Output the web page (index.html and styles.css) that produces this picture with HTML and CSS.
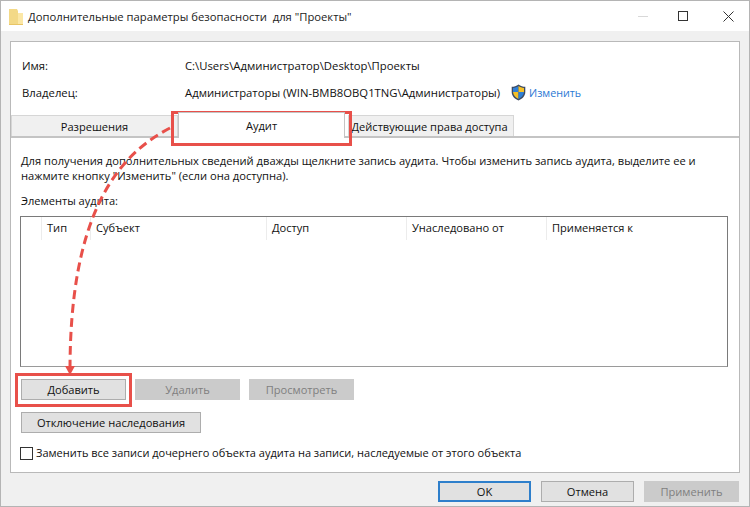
FILE: index.html
```html
<!DOCTYPE html>
<html lang="ru">
<head>
<meta charset="UTF-8">
<title>Дополнительные параметры безопасности</title>
<link rel="stylesheet" href="styles.css">
</head>
<body>
<div class="window">

  <!-- Заголовок окна -->
  <div class="titlebar">
    <svg class="folder" width="14" height="17" viewBox="0 0 14 17">
      <path d="M0 1h8l1 2v14H0z" fill="#f3d987"/>
      <path d="M9 5h5v12H9z" fill="#fbe7a6"/>
      <path d="M0 16h14v1H0z" fill="#e8c566"/>
    </svg>
    <span class="title">Дополнительные параметры безопасности&nbsp; для "Проекты"</span>
    <div class="winbtns">
      <span class="min"></span>
      <span class="max"></span>
      <svg class="close" width="11" height="11" viewBox="0 0 11 11"><path d="M.5.5l10 10M10.5.5l-10 10" stroke="#333" fill="none"/></svg>
    </div>
  </div>

  <div class="panel">
    <div class="info">
      <div class="info-row"><span class="info-label">Имя:</span><span>C:\Users\Администратор\Desktop\Проекты</span></div>
      <div class="info-row">
        <span class="info-label">Владелец:</span>
        <span>Администраторы (WIN-BMB8OBQ1TNG\Администраторы)</span>
        <svg class="shield" width="15" height="17" viewBox="0 0 15 17">
          <path d="M7.5 0.5C5.5 2 3 2.800 0.700 2.800V8c0 4 3 7 6.800 8.500C11.300 15 14.300 12 14.300 8V2.800C12 2.800 9.500 2 7.500 .5z" fill="#3c4a63"/>
          <path d="M7.500 2C6 3 4 3.800 2 4v4h5.500z" fill="#2f7fd6"/>
          <path d="M7.500 2v6H13V4C11 3.800 9 3 7.500 2z" fill="#f5c026"/>
          <path d="M2 8h5.500v7C4.500 13.800 2.300 11.300 2 8z" fill="#f5c026"/>
          <path d="M7.500 8H13c-.3 3.300-2.500 5.800-5.500 7z" fill="#2f7fd6"/>
        </svg>
        <a class="link">Изменить</a>
      </div>
    </div>

    <div class="tabs">
      <div class="tab tab-first">Разрешения</div>
      <div class="tab tab-active">Аудит</div>
      <div class="tab tab-last">Действующие права доступа</div>
    </div>

    <div class="tabbody">
      <p class="hint">Для получения дополнительных сведений дважды щелкните запись аудита. Чтобы изменить запись аудита, выделите ее и<br>нажмите кнопку "Изменить" (если она доступна).</p>
      <div class="list-label">Элементы аудита:</div>

      <div class="list">
        <div class="list-head">
          <div class="col col-blank"></div>
          <div class="col col-type">Тип</div>
          <div class="col col-subj">Субъект</div>
          <div class="col col-access">Доступ</div>
          <div class="col col-inh">Унаследовано от</div>
          <div class="col col-apply">Применяется к</div>
        </div>
      </div>

      <div class="actions">
        <button class="btn btn-add">Добавить</button>
        <button class="btn btn-off">Удалить</button>
        <button class="btn btn-off">Просмотреть</button>
      </div>
      <button class="btn btn-inherit">Отключение наследования</button>

      <label class="replace"><span class="check"></span>Заменить все записи дочернего объекта аудита на записи, наследуемые от этого объекта</label>
    </div>
  </div>

  <div class="footer">
    <button class="btn btn-foot btn-ok">OK</button>
    <button class="btn btn-foot">Отмена</button>
    <button class="btn btn-foot btn-off btn-apply">Применить</button>
  </div>

  <!-- Пометки поверх окна -->
  <div class="mark mark-tab"></div>
  <div class="mark mark-add"></div>
  <svg class="arrow" width="750" height="507" viewBox="0 0 750 507">
    <path d="M170 128C112 158 70 222 70 370" fill="none" stroke="#e8504a" stroke-width="3" stroke-dasharray="9 5"/>
    <path d="M65 366h10l-5 9z" fill="#e8504a"/>
  </svg>
</div>
</body>
</html>
```
FILE: styles.css
```css
*{box-sizing:border-box;}
html,body{margin:0;padding:0;}
body{width:750px;height:507px;overflow:hidden;font-family:"Open Sans","Noto Sans",sans-serif;font-size:11.1px;color:#111;}
.window{position:relative;width:750px;height:507px;background:#f0f0f0;border:1px solid #b4b4b4;display:flex;flex-direction:column;}

.titlebar{height:30px;background:#fff;display:flex;align-items:center;padding-left:8px;flex:none;}
.folder{margin-right:5px;}
.title{font-size:11.25px;color:#222;}
.winbtns{margin-left:auto;display:flex;align-items:center;height:100%;}
.min{width:10px;height:1px;background:#d8d8d8;margin-right:30px;}
.max{width:10px;height:10px;border:1px solid #333;margin-right:35px;}
.close{margin-right:15px;}

.panel{margin:10px 9px 0 9px;height:432px;background:#fff;border:1px solid #b9b9b9;display:flex;flex-direction:column;flex:none;}

.info{padding:10px 0 0 11px;height:73px;font-size:11.3px;}
.info-label{width:163px;}
.info-row{display:flex;align-items:center;height:27px;}
.shield{margin-left:11px;margin-right:3px;}
.link{color:#2a78d4;font-size:10.7px;}

.tabs{display:flex;height:23px;background:#fff;border-bottom:2px solid #c4c4c4;flex:none;align-items:flex-end;}
.tab{height:21px;display:flex;align-items:center;justify-content:center;background:#f0f0f0;border:1px solid #d6d6d6;border-bottom:none;}
.tab-first{width:167px;}
.tab-active{width:167px;height:26px;margin:0 3px 0 0;background:#fff;position:relative;top:2px;z-index:1;border-color:#c4c4c4;}
.tab-last{width:166px;padding-right:3px;}

.tabbody{padding:15px 10px 0 9px;flex:1;}
.hint{margin:0;padding-left:1px;line-height:15px;white-space:nowrap;font-size:11.15px;}
.list-label{margin-top:10px;padding-left:1px;line-height:15px;}
.list{margin-top:8px;width:708px;height:151px;border:1px solid #7a7a7a;border-bottom-color:#9a9a9a;background:#fff;}
.list-head{display:flex;height:23px;}
.col{height:23px;padding:2px 0 0 5px;line-height:18px;border-right:1px solid #ececec;}
.col-blank{width:21px;}
.col-type{width:49px;}
.col-subj{width:176px;}
.col-access{width:140px;}
.col-inh{width:140px;}
.col-apply{width:150px;border-right:none;}

.btn{display:block;height:21px;padding:0;font:inherit;color:#111;background:#e1e1e1;border:1px solid #adadad;}
.btn-off{background:#cbcbcb;border-color:#cbcbcb;color:#7f7f7f;}
.actions{display:flex;margin:12px 0 0 1px;}
.actions .btn{width:105px;margin-right:9px;}
.btn-inherit{width:180px;margin:12px 0 0 1px;}

.replace{display:flex;align-items:center;margin-top:13px;line-height:14px;font-size:11px;}
.check{width:13px;height:13px;border:1px solid #333;background:#fff;margin-right:3px;flex:none;}

.footer{display:flex;justify-content:flex-end;padding:8px 10px 0 0;}
.btn-foot{width:93px;margin-left:10px;}
.btn-apply{width:95px;}
.btn-ok{border:2px solid #2e7fcb;}

/* пометки */
.mark{position:absolute;border:3px solid #e8504a;}
.mark-tab{left:170px;top:110px;width:181px;height:35px;}
.mark-add{left:14px;top:372px;width:117px;height:34px;}
.arrow{position:absolute;left:-1px;top:-1px;pointer-events:none;}
```
